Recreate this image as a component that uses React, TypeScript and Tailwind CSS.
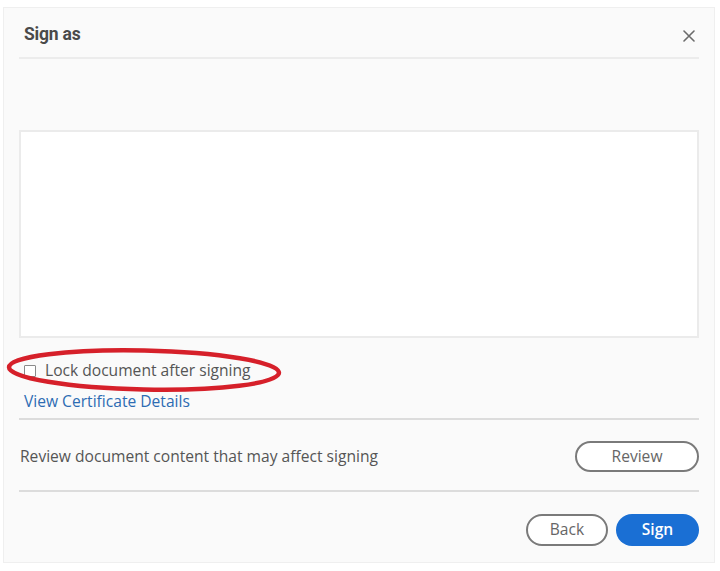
import React from "react";

const body = { fontFamily: '"Open Sans", "Liberation Sans", sans-serif' };

export default function App() {
  return (
    <div className="w-[720px] h-[571px] bg-white overflow-hidden" style={body}>
      <div className="ml-[3px] mt-[7px] w-[712px] h-[556px] bg-[#fafafa] border border-[#efefef] px-[15px] flex flex-col">
        {/* header */}
        <div className="h-[49px] flex items-center justify-between pl-[5px] pr-[4px] pt-[3px]">
          <span
            className="text-[17.5px] font-bold text-[#4a4a4a] tracking-[-0.2px]"
            style={{ fontFamily: 'Roboto, "Liberation Sans", sans-serif' }}
          >
            Sign as
          </span>
          <svg width="12" height="12" viewBox="0 0 12 12" className="mt-[3px]">
            <path d="M1 1L11 11M11 1L1 11" stroke="#6b6b6b" strokeWidth="1.6" strokeLinecap="round" />
          </svg>
        </div>
        <div className="h-[2px] bg-[#ececec]" />

        {/* certificate preview area */}
        <div className="mt-[71px] h-[208px] bg-white border-2 border-[#ebebeb]" />

        {/* lock checkbox */}
        <div className="relative mt-[23px] h-[20px] flex items-center pl-[5px]">
          <span className="w-[12px] h-[12px] border border-[#8a8a8a] bg-white rounded-[1px]" />
          <span className="ml-[9px] text-[15.6px] text-[#555]">Lock document after signing</span>
          <svg
            className="absolute left-[-14px] top-[-14px] pointer-events-none"
            width="278"
            height="46"
            viewBox="0 0 278 46"
          >
            <ellipse
              cx="139"
              cy="23"
              rx="135"
              ry="19.5"
              fill="none"
              stroke="#d6202a"
              strokeWidth="4.5"
              transform="rotate(1.2 139 23)"
            />
          </svg>
        </div>

        <div className="mt-[11px] h-[20px] flex items-center pl-[5px]">
          <span className="text-[15.6px] text-[#2d6cb3]">View Certificate Details</span>
        </div>

        <div className="mt-[6px] h-[2px] bg-[#dcdcdc]" />

        {/* review row */}
        <div className="mt-[21px] h-[31px] flex items-center justify-between pl-[1px]">
          <span className="text-[15.6px] text-[#555]">Review document content that may affect signing</span>
          <button className="w-[124px] h-[31px] rounded-full border-2 border-[#7a7a7a] bg-white text-[15.6px] text-[#666]">
            Review
          </button>
        </div>

        <div className="mt-[18px] h-[2px] bg-[#dcdcdc]" />

        {/* actions */}
        <div className="mt-[22px] flex justify-end gap-[8px]">
          <button className="w-[82px] h-[32px] rounded-full border-2 border-[#7a7a7a] bg-white text-[15.6px] text-[#666]">
            Back
          </button>
          <button className="w-[83px] h-[32px] rounded-full bg-[#1a6fd4] text-[15.6px] font-semibold text-white">
            Sign
          </button>
        </div>
      </div>
    </div>
  );
}
